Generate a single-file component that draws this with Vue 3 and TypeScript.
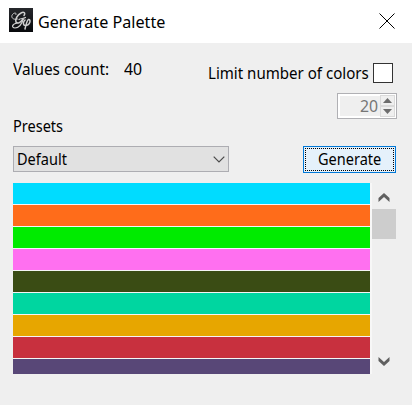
<script setup lang="ts">
import { ref } from 'vue'

const valuesCount = 40
const limit = ref<number>(20)
const preset = ref<string>('Default')
const colors: string[] = [
  '#00dcff', '#ff6c1a', '#00eb00', '#ff70f0', '#3a4c14',
  '#00d6a0', '#e7a600', '#c8303e', '#584777',
]
</script>

<template>
  <div class="dialog">
    <header class="titlebar">
      <svg class="logo" viewBox="0 0 24 24">
        <defs>
          <linearGradient id="logo-bg" x1="0" y1="0" x2="0" y2="1">
            <stop offset="0" stop-color="#26282c" />
            <stop offset="1" stop-color="#08090c" />
          </linearGradient>
        </defs>
        <rect width="24" height="24" fill="url(#logo-bg)" />
        <g fill="none" stroke="#d0d0d0" stroke-linecap="round">
          <path stroke-width="1.500" d="M15 7.500C17 4.500 14.500 3.500 12 5C8 7 6 11.500 7 14C8.500 16.500 12 14 14 11" />
          <path stroke-width="1.200" d="M10 11.500C12 10 14 11 16.500 9.500M14.500 10.500C13 15.500 10 20 6 20C2 19.500 3 16 8 15" />
          <path stroke-width="1" d="M8.500 11C4 12.500 1.500 9 3.500 6.500C5 4.500 8 4.500 7 6.500" />
          <path stroke-width="1.500" d="M16 12C13.500 14.500 14 18 17 17.500C21.500 17 22 11 19.500 11.500C18 12 17.500 15 16 21" />
        </g>
      </svg>
      <h1 class="title"><span class="text text-title">Generate Palette</span></h1>
      <svg class="close" viewBox="0 0 16 16"><path d="M.5.5 15.500 15.500M15.500.5.5 15.500" fill="none" stroke="#000" stroke-width="1" /></svg>
    </header>

    <main class="content">
      <section class="options">
        <div class="count">
          <span class="count-label"><span class="text text-values">Values count:</span></span>
          <span class="text text-number">{{ valuesCount }}</span>
        </div>
        <div class="limit">
          <div class="limit-row">
            <span class="limit-label"><span class="text text-limit">Limit number of colors</span></span>
            <span class="checkbox"></span>
          </div>
          <div class="spin">
            <span class="spin-value"><span class="text text-number">{{ limit }}</span></span>
            <div class="steppers">
              <span class="step"><svg viewBox="0 0 9 5"><path d="M0 5 4.500 0 9 5Z" fill="#6d6d6d" /></svg></span>
              <span class="step"><svg viewBox="0 0 9 5"><path d="M0 0 4.500 5 9 0Z" fill="#6d6d6d" /></svg></span>
            </div>
          </div>
        </div>
      </section>

      <div class="presets-label"><span class="text text-presets">Presets</span></div>

      <section class="actions">
        <div class="combo">
          <span class="text text-default">{{ preset }}</span>
          <svg class="combo-arrow" viewBox="0 0 12 7"><path d="M.7.7 6 6 11.300.7" fill="none" stroke="#4a4a4a" stroke-width="1.2" /></svg>
        </div>
        <div class="generate"><div class="focus"><span class="text text-generate">Generate</span></div></div>
      </section>

      <section class="palette">
        <div class="swatches">
          <div v-for="color in colors" :key="color" class="swatch" :style="{ background: color }"></div>
        </div>
        <div class="scrollbar">
          <svg class="scroll-arrow" viewBox="0 0 12 9"><path d="M.5 9V5L6 0 11.500 5V9L6 4Z" fill="#606060" /></svg>
          <div class="thumb"></div>
          <svg class="scroll-arrow down" viewBox="0 0 12 9"><path d="M.5 0V4L6 9 11.500 4V0L6 5Z" fill="#606060" /></svg>
        </div>
      </section>
    </main>
  </div>
</template>

<style>
body { margin: 0; overflow: hidden; }
</style>

<style scoped>
.dialog {
  box-sizing: border-box;
  width: 412px;
  height: 405px;
  background: #efefef;
  color: #000;
  font: 16.5px/20px "Noto Sans", sans-serif;
}
.dialog * { box-sizing: border-box; }
svg { display: block; flex: none; }
.text { display: inline-block; white-space: nowrap; transform-origin: 0 50%; }
.titlebar { display: flex; height: 43px; padding: 8px 17px 0 9px; background: #fff; }
.logo { width: 24px; height: 24px; }
.title { width: 200px; margin: 4px 0 0 5px; font-size: 17px; font-weight: 400; line-height: 20px; }
.text-title { transform: scaleX(.95); }
.close { width: 16px; height: 16px; margin: 5px 0 0 auto; }
.content { padding: 20px 16px 0 13px; }
.options { display: flex; justify-content: space-between; height: 54px; }
.count { display: flex; height: 20px; margin-top: -4px; }
.count-label { width: 111px; }
.text-values { transform: scaleX(.93); }
.text-number { transform: scaleX(.96); }
.limit { display: flex; flex-direction: column; align-items: flex-end; width: 190px; margin-right: -1px; }
.limit-row { display: flex; padding-right: 4px; }
.limit-label { width: 165px; }
.text-limit { transform: scaleX(.913); }
.checkbox { width: 20px; height: 20px; background: #fff; border: 1px solid #333; }
.spin { display: flex; width: 60px; height: 26px; margin-top: 10px; padding: 1px; background: #fff; border: 1px solid #b0b0b4; }
.spin-value { flex: 1; margin: 1px 0 1px 1px; padding-left: 20px; background: #efefef; color: #767676; }
.steppers { display: flex; flex-direction: column; width: 15px; }
.step { display: flex; align-items: center; justify-content: center; height: 11px; background: #efefef; border: 1px solid #dadada; }
.step svg { width: 9px; height: 5px; }
.presets-label { height: 29px; margin-top: -1px; margin-bottom: 1px; }
.text-presets { transform: scaleX(.88); }
.text-default { transform: scaleX(.88); }
.text-generate { transform: scaleX(.88); }
.actions { display: flex; justify-content: space-between; }
.combo { display: flex; justify-content: space-between; width: 216px; height: 26px; padding: 2px 3px; background: #e1e1e1; border: 1px solid #adadb2; }
.combo-arrow { width: 12px; height: 7px; margin-top: 7px; }
.generate { width: 93px; height: 27px; padding: 1px; background: #e5f1fb; border: 1px solid #0078d7; }
.focus { height: 23px; padding-left: 12px; border: 1px dotted #000; }
.palette { display: flex; margin-top: 10px; }
.swatches { display: flex; flex-direction: column; gap: 1px; width: 357px; height: 191px; overflow: hidden; background: #f5f5f5; }
.swatch { flex: none; height: 21px; }
.scrollbar { display: flex; flex-direction: column; align-items: center; width: 26px; height: 191px; padding: 10px 0 8px 2px; box-shadow: inset 2px 0 #f7f7f7; }
.scroll-arrow { width: 12px; height: 9px; }
.thumb { width: 24px; height: 30px; margin-top: 7px; background: #cdcdcd; }
.down { margin-top: auto; }
</style>
